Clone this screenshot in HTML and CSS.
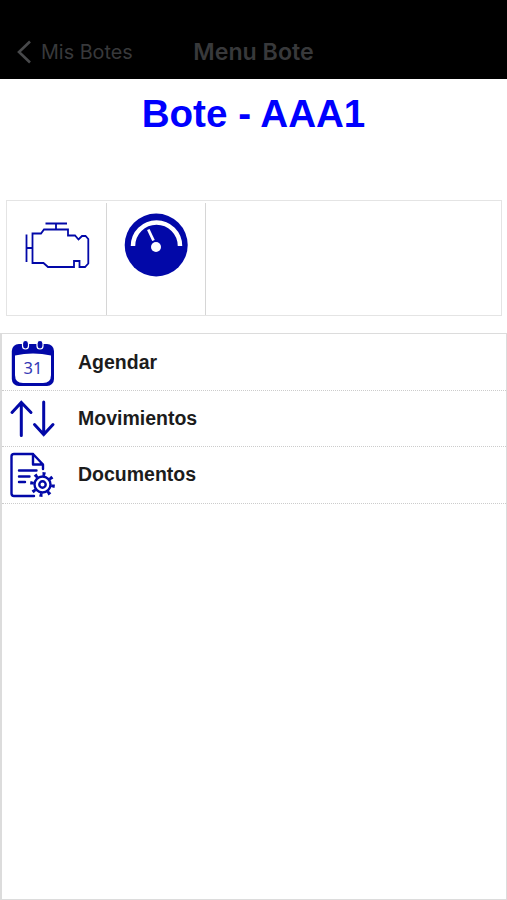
FILE: index.html
```html
<!DOCTYPE html>
<html lang="es">
<head>
  <meta charset="UTF-8">
  <meta name="viewport" content="width=device-width, initial-scale=1.0">
  <title>Menu Bote</title>
  <link rel="stylesheet" href="styles.css">
</head>
<body>
  <!-- Navigation bar -->
  <header class="navbar">
    <a class="back">
      <svg width="16" height="24" viewBox="0 0 16 24">
        <path d="M14 1.500 L3 12 L14 22.500" />
      </svg>
      <span>Mis Botes</span>
    </a>
    <div class="nav-title"><span>Menu Bote</span></div>
  </header>

  <h1>Bote - AAA1</h1>

  <!-- Boat devices -->
  <div class="devices">
    <div class="device">
      <svg class="line" width="98" height="112" viewBox="7 203 98 112">
        <path d="M45.500 223.500H67M56 223.500V229M26.500 234.500V262M26.500 248H32.500M32.500 233.500V263H43.500L48 267H74V261H79.500V267H85L88.300 263.500V239L85.500 236H82L78.500 239.500L75 235.500H68V229.500H44L41 233.500Z" />
      </svg>
    </div>
    <div class="device">
      <svg width="98" height="112" viewBox="107 203 98 112">
        <circle cx="156.200" cy="245" r="31.500" fill="#0208a8" />
        <path d="M133 246A23.500 23.500 0 0 1 180 246" fill="none" stroke="#fff" stroke-width="4.500" />
        <path d="M148.300 229.500L153.500 240.500" stroke="#fff" stroke-width="2.800" />
        <circle cx="156" cy="247" r="5" fill="#fff" />
      </svg>
    </div>
  </div>

  <!-- Menu options -->
  <ul class="menu">
    <li>
      <svg width="48" height="50" viewBox="9 337 48 50">
        <rect x="11.800" y="343" width="42.200" height="42" rx="7" fill="#0208a8" />
        <path d="M15 354.500Q33 350.500 51 354.500V374Q51 382 43 382H23Q15 382 15 374Z" fill="#fff" />
        <rect x="22.500" y="339.500" width="6" height="8.500" rx="3" fill="#0208a8" stroke="#fff" stroke-width="1.200" />
        <rect x="37" y="339.500" width="6" height="8.500" rx="3" fill="#0208a8" stroke="#fff" stroke-width="1.200" />
        <text class="day" x="33" y="373" text-anchor="middle">31</text>
      </svg>
      <span>Agendar</span>
    </li>
    <li>
      <svg class="arrows" width="48" height="50" viewBox="9 394 48 50">
        <path d="M21.300 435.500V403M12 412.500L21.300 402.500L31 412.500" />
        <path d="M43.700 402V434.500M34.500 424.500L43.700 434.500L53 424.500" />
      </svg>
      <span>Movimientos</span>
    </li>
    <li>
      <svg class="document" width="48" height="50" viewBox="9 450 48 50">
        <path d="M34 496H14Q11.500 496 11.500 493.500V456.500Q11.500 454 14 454H33L43 464.500V469M33 454V464.500H43" />
        <path d="M19 470.500H36.500M19 476.500H29.500M19 482H25" />
        <circle cx="42.500" cy="484.500" r="8" />
        <circle cx="42.500" cy="484.500" r="3.200" />
        <circle class="teeth" cx="42.500" cy="484.500" r="10.600" pathLength="80" />
      </svg>
      <span>Documentos</span>
    </li>
  </ul>
</body>
</html>
```

FILE: styles.css
```css
* {
  box-sizing: border-box;
}
body {
  font-family: "Liberation Sans", Arial, sans-serif;
  margin: 0;
  height: 900px;
  display: flex;
  flex-direction: column;
  background-color: #fff;
  color: #1c1c1c;
}
svg {
  display: block;
  flex: none;
}
.navbar {
  height: 79px;
  padding: 25px 16px 0;
  display: grid;
  grid-template-columns: 1fr auto 1fr;
  align-items: center;
  background-color: #000;
  color: #38393b;
  font-family: Inter, sans-serif;
  font-size: 19.8px;
}
.back {
  display: flex;
  align-items: center;
  gap: 9px;
  white-space: nowrap;
}
.back svg {
  fill: none;
  stroke: #48494b;
  stroke-width: 2.6;
}
.nav-title {
  font-size: 23.2px;
  font-weight: 600;
}
h1 {
  margin: 0;
  height: 121px;
  padding-top: 13px;
  text-align: center;
  font-size: 38.6px;
  line-height: 44px;
  color: #0000fe;
}
.devices {
  flex: none;
  height: 116px;
  margin: 0 5px 17px 6px;
  padding-top: 2px;
  display: flex;
  border: 1px solid #e4e4e4;
}
.device {
  width: 99.5px;
  border-right: 1px solid #d6d6d6;
}
.line,
.arrows,
.document {
  fill: none;
  stroke: #0208a8;
}
.line {
  stroke-width: 1.8;
}
.arrows {
  stroke-width: 3;
  stroke-linecap: round;
}
.document {
  stroke-width: 2.4;
  stroke-linecap: round;
  stroke-linejoin: round;
}
.document .teeth {
  stroke-width: 3.6;
  stroke-linecap: butt;
  stroke-dasharray: 3.6 6.4;
}
.day {
  font-family: "Noto Sans", sans-serif;
  font-size: 16.5px;
  font-weight: normal;
  fill: #3439b5;
}
.menu {
  flex: 1;
  margin: 0;
  padding: 1px 0 0;
  list-style: none;
  border: 1px solid #dcdcdc;
  border-left-width: 2px;
}
.menu li {
  height: 56.2px;
  padding-left: 7px;
  display: flex;
  align-items: center;
  gap: 21px;
  border-bottom: 1px dotted #ccc;
  font-size: 19.5px;
  font-weight: bold;
}
```
